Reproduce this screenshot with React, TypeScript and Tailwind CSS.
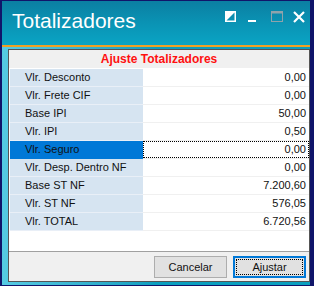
import React from "react";

const rows = [
  { label: "Vlr. Desconto", value: "0,00" },
  { label: "Vlr. Frete CIF", value: "0,00" },
  { label: "Base IPI", value: "50,00" },
  { label: "Vlr. IPI", value: "0,50" },
  { label: "Vlr. Seguro", value: "0,00", selected: true },
  { label: "Vlr. Desp. Dentro NF", value: "0,00" },
  { label: "Base ST NF", value: "7.200,60" },
  { label: "Vlr. ST NF", value: "576,05" },
  { label: "Vlr. TOTAL", value: "6.720,56" },
];

function TitleIcons() {
  return (
    <div className="ml-auto mt-[10px] mr-[5px] flex items-start self-start">
      {/* restore/skin icon */}
      <svg width="11" height="11" viewBox="0 0 11 11" className="mr-[12px]">
        <polygon points="0,0 11,0 0,11" fill="#fff" />
        <rect x="0.75" y="0.75" width="9.5" height="9.5" fill="none" stroke="#fff" strokeWidth="1.5" />
      </svg>
      {/* minimize */}
      <svg width="8" height="11" viewBox="0 0 8 11" className="mr-[15px]">
        <rect x="0" y="9" width="8" height="2" fill="#fff" />
      </svg>
      {/* maximize (disabled) */}
      <svg width="12" height="11" viewBox="0 0 12 11" className="mr-[10px]">
        <rect x="0.5" y="0.5" width="11" height="10" fill="none" stroke="#8fa3ab" strokeWidth="1" />
        <rect x="0" y="0" width="12" height="2.5" fill="#8fa3ab" />
      </svg>
      {/* close */}
      <svg width="12" height="12" viewBox="0 0 12 12">
        <path d="M1 1 L11 11 M11 1 L1 11" stroke="#fff" strokeWidth="2.2" />
      </svg>
    </div>
  );
}

export default function App() {
  return (
    <div
      className="flex h-[286px] w-[314px] flex-col bg-[#10156a] pb-[1px] pl-[2px] pr-[4px] pt-[1px] text-[11px] text-[#111]"
      style={{ fontFamily: '"Liberation Sans", Arial, sans-serif' }}
    >
      <div className="flex flex-1 flex-col bg-[#0a9fbf]">
        {/* Title bar */}
        <div className="flex h-[44px] bg-gradient-to-b from-[#0b7fa2] via-[#0a93b4] to-[#0aa4c4] pl-[10px]">
          <span className="pt-[9px] text-[21px] leading-[21px] text-white">Totalizadores</span>
          <TitleIcons />
        </div>
        <div className="h-[2px] bg-[#f0a024]" />

        {/* Body frame */}
        <div className="flex flex-1 flex-col bg-gradient-to-r from-[#55cbe3] via-[#0a9fbf] to-[#0a9fbf] pb-[3px] pl-[6px] pt-[2px]">
          <div className="flex flex-1 flex-col border border-[#555] bg-white">
            <div className="flex h-[19px] items-center justify-center border-b border-white bg-[#f0f0f0] text-[12px] font-bold text-[#ff1010]">
              Ajuste Totalizadores
            </div>
            <div className="grid grid-cols-[133px_1fr] pl-[1px]">
              {rows.map((r) => (
                <React.Fragment key={r.label}>
                  <div
                    className={
                      r.selected
                        ? "flex h-[18px] items-center border-b border-[#0078d7] bg-[#0078d7] pl-[15px]"
                        : "flex h-[18px] items-center border-b border-[#e9eff7] bg-[#d6e4f1] pl-[15px]"
                    }
                  >
                    {r.label}
                  </div>
                  <div className="flex h-[18px] border-b border-[#f0f0f0]">
                    {r.selected ? (
                      <div className="flex flex-1 items-center justify-end border border-dotted border-black pr-[2px]">
                        {r.value}
                      </div>
                    ) : (
                      <div className="flex flex-1 items-center justify-end pr-[3px]">{r.value}</div>
                    )}
                  </div>
                </React.Fragment>
              ))}
            </div>
            <div className="flex-1" />
            <div className="flex h-[30px] items-start justify-end gap-[6px] border-t border-[#a0a0a0] bg-[#f0f0f0] pr-[3px] pt-[4px]">
              <button className="flex h-[22px] w-[73px] items-center justify-center border border-[#adadad] bg-[#e1e1e1]">
                Cancelar
              </button>
              <button className="flex h-[22px] w-[73px] items-stretch border-2 border-[#0078d7] bg-[#e1e1e1] p-[1px]">
                <span className="flex flex-1 items-center justify-center border border-dotted border-black">Ajustar</span>
              </button>
            </div>
          </div>
        </div>
      </div>
    </div>
  );
}
